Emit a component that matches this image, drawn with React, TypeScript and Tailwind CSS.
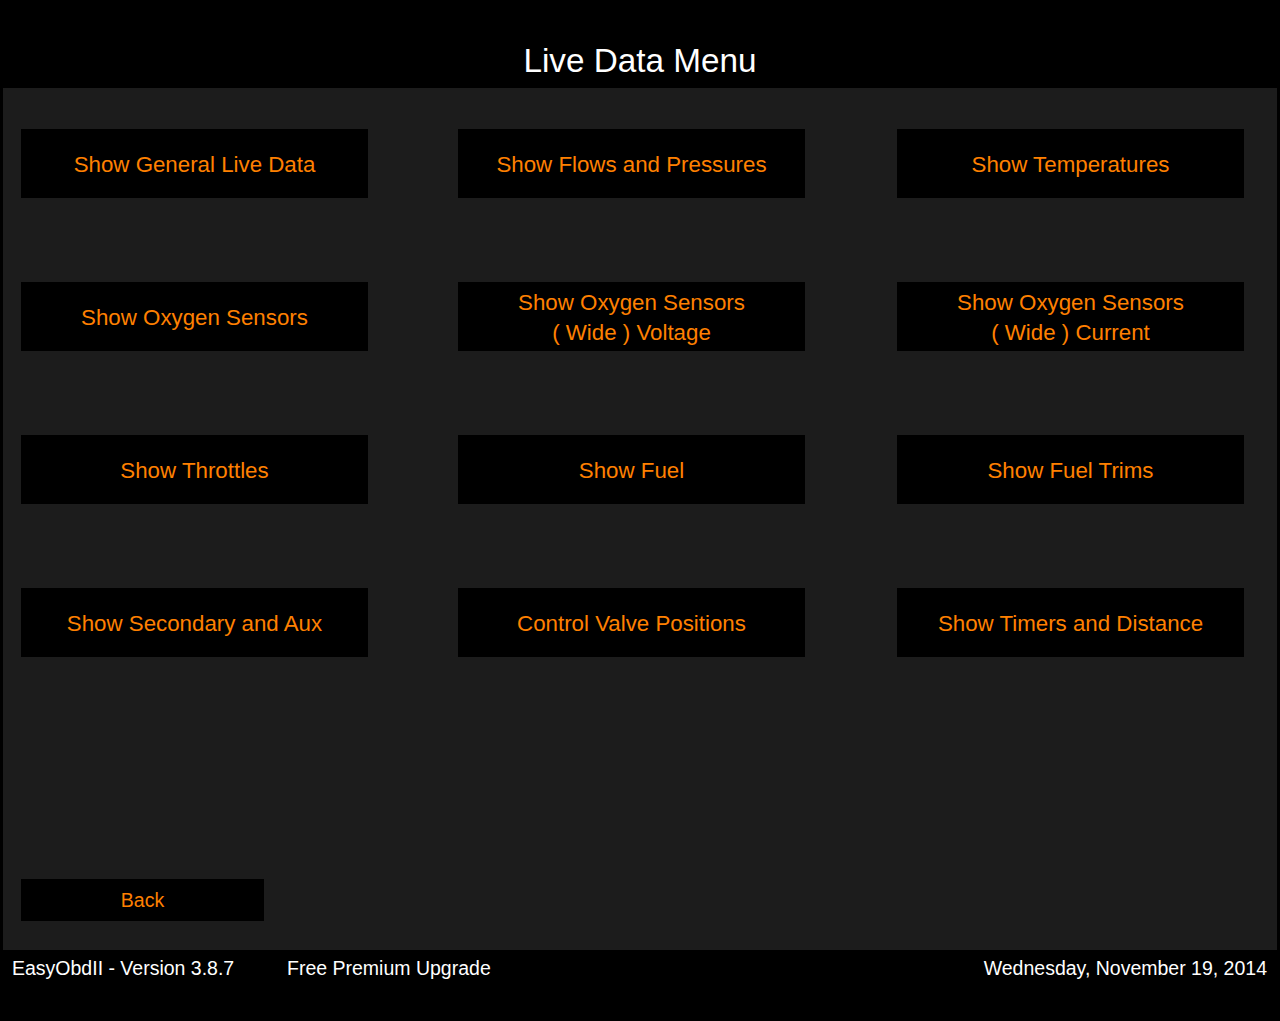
const menuItems: string[][] = [
  ["Show General Live Data"],
  ["Show Flows and Pressures"],
  ["Show Temperatures"],
  ["Show Oxygen Sensors"],
  ["Show Oxygen Sensors", "( Wide ) Voltage"],
  ["Show Oxygen Sensors", "( Wide ) Current"],
  ["Show Throttles"],
  ["Show Fuel"],
  ["Show Fuel Trims"],
  ["Show Secondary and Aux"],
  ["Control Valve Positions"],
  ["Show Timers and Distance"],
];

const App = () => {
  return (
    <div
      className="flex h-[1021px] w-[1280px] flex-col bg-black"
      style={{ fontFamily: '"Liberation Sans", Arial, sans-serif' }}
    >
      {/* Header */}
      <div className="h-[88px] pt-[44px] text-center text-[33.3px] leading-none text-white">
        Live Data Menu
      </div>

      {/* Menu panel */}
      <div className="mx-[3px] flex h-[862px] flex-col bg-[#1c1c1c] pl-[18px] pr-[33px] pt-[41px] pb-[29px]">
        <div className="grid grid-cols-[437px_439px_347px] gap-y-[84px]">
          {menuItems.map((lines, i) => (
            <button
              key={i}
              className="flex h-[69px] w-[347px] flex-col items-center justify-center bg-black pt-[2px] text-[22.3px] leading-[30px] text-[#ff8000]"
            >
              {lines.map((line) => (
                <span key={line}>{line}</span>
              ))}
            </button>
          ))}
        </div>

        <button className="mt-auto flex h-[42px] w-[243px] items-center justify-center bg-black pt-[1px] text-[19.5px] text-[#ff8000]">
          Back
        </button>
      </div>

      {/* Status bar */}
      <div className="flex flex-1 pl-[12px] pr-[13px] pt-[9px] text-[19.5px] leading-none text-white">
        <span className="w-[275px]">EasyObdII - Version 3.8.7</span>
        <span>Free Premium Upgrade</span>
        <span className="ml-auto">Wednesday, November 19, 2014</span>
      </div>
    </div>
  );
};

export default App;
